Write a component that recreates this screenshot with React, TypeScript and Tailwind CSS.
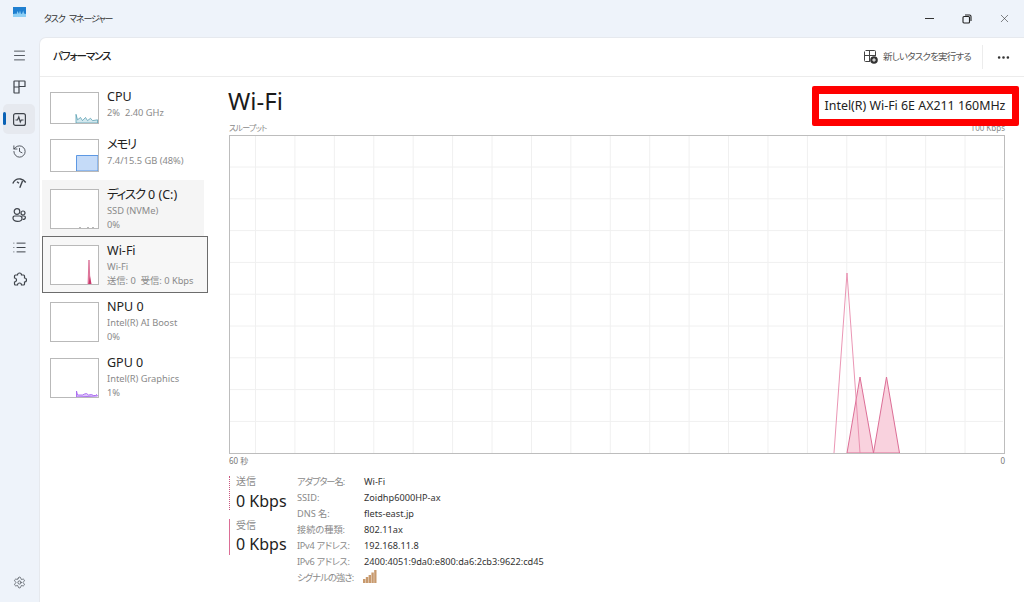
import React from "react";
import { Menu, History, List, Settings, X, MoreHorizontal } from "lucide-react";

const FONT = "font-['Noto_Sans','Noto_Sans_CJK_JP',sans-serif] [font-feature-settings:'palt']";

function Thumb({ h, children }: { h: string; children?: React.ReactNode }) {
  return (
    <div className={`w-[49px] ${h} border border-[#b9b9b9] bg-white shrink-0 overflow-hidden`}>
      <svg viewBox="0 0 47 38" preserveAspectRatio="none" className="w-full h-full block">{children}</svg>
    </div>
  );
}

function Item({ cls, thumbH, textCls, title, lines, children }: { cls: string; thumbH: string; textCls: string; title: React.ReactNode; lines: string[]; children?: React.ReactNode }) {
  return (
    <div className={`flex gap-[8px] ${cls}`}>
      <Thumb h={thumbH}>{children}</Thumb>
      <div className={textCls}>
        <div className="text-[12.5px] leading-[18px] text-[#222] whitespace-nowrap">{title}</div>
        {lines.map((l) => (
          <div key={l} className="text-[9.3px] leading-[13.5px] text-[#8a8a8a] whitespace-pre">{l}</div>
        ))}
      </div>
    </div>
  );
}

function RailCell({ children, cls = "h-[32px]" }: { children: React.ReactNode; cls?: string }) {
  return <div className={`${cls} w-[32px] flex items-center justify-center`}>{children}</div>;
}

function Rail() {
  const c = "text-[#3f444b]";
  const s = "#3f444b";
  return (
    <div className="w-[39px] shrink-0 flex flex-col items-center pr-[1px]">
      <RailCell cls="h-[34px] pt-[2px]"><Menu size={15} strokeWidth={1.4} className={c} /></RailCell>
      <RailCell>
        <svg width="13" height="14" viewBox="0 0 13 14" fill="none" stroke={s} strokeWidth="1.2"><path d="M1.500 1h10a.5.5 0 0 1 .5.500V6.500H6V13H1.500a.5.5 0 0 1-.5-.5v-11a.5.5 0 0 1 .5-.5zM6 1v5.500M1 7h5" /></svg>
      </RailCell>
      <div className="relative h-[30px] w-[32px] my-[1px] rounded-[5px] bg-[#e6e9ef] flex items-center justify-center">
        <span className="absolute left-0 top-[8px] w-[3px] h-[13px] rounded bg-[#0a62b5]" />
        <svg width="13" height="13" viewBox="0 0 13 13" fill="none" stroke={s} strokeWidth="1.2"><rect x="0.600" y="0.600" width="11.800" height="11.800" rx="2" /><path d="M2.500 7h2l1.300-3 1.500 5 1-2h2.200" /></svg>
      </div>
      <RailCell><History size={15} strokeWidth={1.4} className={c} /></RailCell>
      <RailCell>
        <svg width="15" height="12" viewBox="0 0 15 12" fill="none" stroke={s} strokeWidth="1.4"><path d="M.8 6.500C2.500 3 5.500 1.500 8.500 2c2 .3 3.800 1.500 5.200 3.500" /><path d="M10.500 4L7.800 10.800" /><path d="M5 4.800l2 1.500" /></svg>
      </RailCell>
      <RailCell>
        <svg width="14" height="14" viewBox="0 0 14 14" fill="none" stroke={s} strokeWidth="1.2"><circle cx="5" cy="3.500" r="2.800" /><circle cx="11" cy="5" r="2" /><path d="M2.500 8h5.200c1.400 0 2.300 1 2.300 2.200 0 2-2 3.200-4.500 3.200S1 12.200 1 10.200C1 9 1.500 8 2.500 8z" /><path d="M10 8h2c.8 0 1.400.6 1.400 1.400 0 1.200-1 2-2.800 2.100" /></svg>
      </RailCell>
      <RailCell><List size={15} strokeWidth={1.6} className={c} /></RailCell>
      <RailCell>
        <svg width="15" height="15" viewBox="0 0 15 15" fill="none" stroke={s} strokeWidth="1.2"><path d="M3.500 3H5.500a2 2 0 0 1 4 0h2a1 1 0 0 1 1 1v2a2 2 0 0 1 0 4v2a1 1 0 0 1-1 1h-2a2 2 0 0 0-4 0h-2a1 1 0 0 1-1-1v-2a2 2 0 0 0 0-4V4a1 1 0 0 1 1-1z" /></svg>
      </RailCell>
      <div className="mt-auto mb-[13px]"><Settings size={13} strokeWidth={1.3} className={c} /></div>
    </div>
  );
}

function Chart() {
  const xs = Array.from({ length: 19 }, (_, i) => 25.5 + i * 39.42);
  const ys = Array.from({ length: 9 }, (_, i) => 31 + i * 31.8);
  return (
    <div className="h-[319px] border border-[#bdbdbd] bg-white">
      <svg width="773" height="317" viewBox="0 0 773 317" className="block">
        {xs.map((x) => <line key={x} x1={x} x2={x} y1="0" y2="317" stroke="#f0f0f0" />)}
        {ys.map((y) => <line key={y} x1="0" x2="773" y1={y} y2={y} stroke="#f0f0f0" />)}
        <path d="M617 317 L630 241 L643.5 317 L656.5 241 L669.5 317 Z" fill="#f9d2de" stroke="#dc6e96" strokeWidth="1" />
        <path d="M604 317 L617 137 L630 317" fill="none" stroke="#e88aab" strokeWidth="0.9" />
      </svg>
    </div>
  );
}

const info: [string, string, string][] = [
  ["アダプター名:", "Wi-Fi", "tracking-[-1px]"],
  ["SSID:", "Zoidhp6000HP-ax", ""],
  ["DNS 名:", "flets-east.jp", ""],
  ["接続の種類:", "802.11ax", ""],
  ["IPv4 アドレス:", "192.168.11.8", "tracking-[-0.3px]"],
  ["IPv6 アドレス:", "2400:4051:9da0:e800:da6:2cb3:9622:cd45", "tracking-[-0.3px]"],
];

export default function App() {
  return (
    <div className={`${FONT} w-[1024px] h-[602px] overflow-hidden bg-[#eef3fa] flex flex-col`}>
      <div className="h-[37px] shrink-0 flex items-center">
        <div className="w-[39px] flex justify-center -mt-[13px]">
          <svg width="13" height="10" viewBox="0 0 13 10"><rect width="13" height="10" fill="#8fd0f5" /><path d="M0 0h13v7l-2-.5-.8-3-1 3L8 7 7 3.500 6 7 4.500 4 3.500 7 2 6.500 1 7H0z" fill="#1f7fd0" /></svg>
        </div>
        <div className="ml-[5px] text-[9px] tracking-[-1.1px] [word-spacing:3px] text-[#333]">タスク マネージャー</div>
        <div className="ml-auto flex items-center text-[#333]">
          <div className="w-[37px] flex justify-center"><span className="block w-[9px] h-px bg-[#333]" /></div>
          <div className="w-[37px] flex justify-center">
            <svg width="10" height="10" viewBox="0 0 10 10" fill="none" stroke="#222" strokeWidth="1.1"><rect x="1" y="2.500" width="6.500" height="6.500" rx="1" /><path d="M3 1h4.500A1.500 1.500 0 0 1 9 2.500V7" /></svg>
          </div>
          <div className="w-[39px] flex justify-center"><X size={13} strokeWidth={1.1} /></div>
        </div>
      </div>
      <div className="flex-1 flex min-h-0">
        <Rail />
        <div className="flex-1 bg-white rounded-tl-[7px] border-l border-t border-[#e6e9ee] flex flex-col min-w-0">
          <div className="h-[39px] shrink-0 border-b border-[#ececec] flex items-center pl-[13px]">
            <div className="text-[10.5px] tracking-[-1.1px] font-medium text-[#222]">パフォーマンス</div>
            <div className="ml-auto flex items-center">
              <svg width="14" height="14" viewBox="0 0 14 14" fill="none" stroke="#444" strokeWidth="1"><path d="M1.500.5h9a1 1 0 0 1 1 1V6M.5 1.500v9a1 1 0 0 0 1 1H6M.5 5.500h11M5.500.5v11" /><circle cx="10" cy="10" r="3.800" fill="#333" stroke="none" /><path d="M10 8.200v3.600M8.200 10h3.600" stroke="#fff" /></svg>
              <span className="ml-[5px] text-[9.5px] tracking-[-0.8px] text-[#555]">新しいタスクを実行する</span>
              <div className="ml-[11px] w-px h-[24px] bg-[#ececec]" />
              <MoreHorizontal size={15} strokeWidth={2.2} className="ml-[13px] mr-[13px] text-[#333]" />
            </div>
          </div>
          <div className="flex-1 flex min-h-0">
            <div className="w-[181px] shrink-0 pt-[5px] pl-[2px]">
              <Item cls="h-[49px] pl-[8px] pt-[10px]" textCls="-mt-[4px]" thumbH="h-[32px]" title="CPU" lines={["2%  2.40 GHz"]}>
                <path d="M25 38V27l1.500 7 3-3 2 4 3-4 2 4 3-3 2 3 5-1v4z" fill="#d3e8ee" stroke="#4b97ad" strokeWidth="0.8" />
              </Item>
              <Item cls="h-[49px] pl-[8px] pt-[8px]" textCls="-mt-[3px]" thumbH="h-[33px]" title={<span className="tracking-[-1.5px]">メモリ</span>} lines={["7.4/15.5 GB (48%)"]}>
                <path d="M25.500 38V19h21.500v19z" fill="#c5dbf8" stroke="#4e8ee0" strokeWidth="1" />
              </Item>
              <Item cls="h-[56px] w-[162px] pl-[8px] pt-[9px] bg-[#f5f5f5]" textCls="-mt-[3px]" thumbH="h-[40px]" title={<><span className="tracking-[-1.3px]">ディスク</span> 0 (C:)</>} lines={["SSD (NVMe)", "0%"]}>
                <path d="M28 37.500h2M36 37.500h2M41 37.500h2" stroke="#999" strokeWidth="0.7" />
              </Item>
              <Item cls="h-[57px] w-[166px] pl-[7px] pt-[8px] bg-[#f7f7f7] border border-[#6c6c6c]" textCls="-mt-[3px]" thumbH="h-[40px]" title="Wi-Fi" lines={["Wi-Fi", "送信: 0  受信: 0 Kbps"]}>
                <path d="M37 38L38 14l1 24z" fill="#e8a" stroke="#d0517f" strokeWidth="0.7" />
                <path d="M37.500 38l1.500-8 1.500 8z" fill="#c9396d" />
              </Item>
              <Item cls="h-[56px] pl-[8px] pt-[9px]" textCls="-mt-[4px]" thumbH="h-[40px]" title="NPU 0" lines={["Intel(R) AI Boost", "0%"]} />
              <Item cls="h-[56px] pl-[8px] pt-[9px]" textCls="-mt-[4px]" thumbH="h-[40px]" title="GPU 0" lines={["Intel(R) Graphics", "1%"]}>
                <path d="M25.500 38v-6l1 4h5l2-1 2-.5 2 1.500 3-.5 2 1h2l1-1 1 1.500z" fill="#dcc4fb" stroke="#a768ef" strokeWidth="0.9" />
              </Item>
            </div>
            <div className="flex-1 min-w-0 pl-[8px] pr-[19px]">
              <div className="h-[45px] flex justify-between items-start pt-[9px]">
                <div className="text-[24px] leading-[34px] -mt-[2px] -ml-[1px] text-[#1a1a1a]">Wi-Fi</div>
                <div className="h-[40px] w-[207px] -mr-[14px] relative z-10 border-[7px] border-t-[8px] border-[#ff0000] rounded-[2px] bg-white flex items-center justify-center text-[12.4px] text-[#222] whitespace-nowrap pr-[1px]">
                  Intel(R) Wi-Fi 6E AX211 160MHz
                </div>
              </div>
              <div className="flex justify-between text-[8px] leading-[12px] text-[#8a8a8a]">
                <span className="tracking-[-0.7px]">スループット</span><span>100 Kbps</span>
              </div>
              <div className="h-px" />
              <Chart />
              <div className="flex justify-between text-[8px] leading-[12px] text-[#777] mt-[1px]">
                <span>60 秒</span><span>0</span>
              </div>
              <div className="flex mt-[9px]">
                <div className="w-[68px] shrink-0">
                  <div className="border-l border-dotted border-[#c9567f] pl-[6px] h-[34px]">
                    <div className="text-[10px] leading-[10px] text-[#8a8a8a]">送信</div>
                    <div className="mt-[5px] text-[16px] leading-[20px] text-[#222] whitespace-nowrap">0 Kbps</div>
                  </div>
                  <div className="mt-[9px] border-l-[1.5px] border-[#dc6e96] pl-[6px] h-[36px]">
                    <div className="text-[10px] leading-[12px] text-[#8a8a8a]">受信</div>
                    <div className="mt-[3px] text-[16px] leading-[20px] text-[#222] whitespace-nowrap">0 Kbps</div>
                  </div>
                </div>
                <div className="grid grid-cols-[67px_auto] auto-rows-[16px] text-[9.2px] leading-[16px] -mt-[2px]">
                  {info.map(([k, v, t]) => (
                    <React.Fragment key={k}>
                      <div className={`text-[#8a8a8a] whitespace-nowrap ${t}`}>{k}</div>
                      <div className="text-[#333] whitespace-nowrap">{v}</div>
                    </React.Fragment>
                  ))}
                  <div className="text-[#8a8a8a] whitespace-nowrap tracking-[-0.8px]">シグナルの強さ:</div>
                  <div className="-ml-[1px]">
                    <svg width="14" height="13" viewBox="0 0 14 13" className="block">
                      <path d="M0 13V9h2.400v4zM2.800 13V7h2.400v6zM5.600 13V5h2.400v8zM8.400 13V2.500h2.400V13zM11.200 13V0H13.500v13z" fill="#c89a6e" />
                    </svg>
                  </div>
                </div>
              </div>
            </div>
          </div>
        </div>
      </div>
    </div>
  );
}
